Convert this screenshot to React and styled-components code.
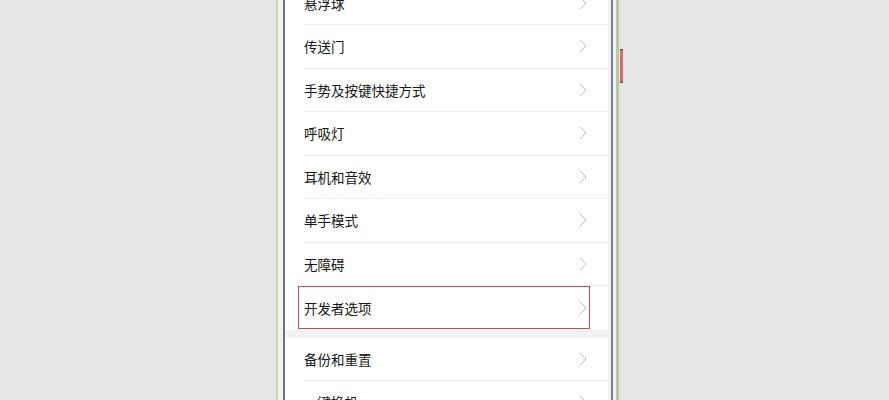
import React from "react";
import styled, { createGlobalStyle } from "styled-components";

const Global = createGlobalStyle`
  html, body { margin: 0; padding: 0; background: #e4e5e7; overflow: hidden; }
  body { font-family: "Noto Sans CJK SC", "Noto Sans", sans-serif; }
`;

const Stage = styled.div`
  width: 889px;
  height: 400px;
  overflow: hidden;
  display: flex;
  padding-left: 276px;
  box-sizing: border-box;
`;

const PhoneOuter = styled.div`
  position: relative;
  display: flex;
  align-items: stretch;
  height: 460px;
  margin-top: -30px;
  border-left: 2px solid #c9d6a6;
  border-right: 3px solid #b8cb9c;
`;

const Bezel = styled.div`
  display: flex;
  background: #eff1ec;
  padding: 0 3px 0 5px;
`;

const InnerFrame = styled.div`
  display: flex;
  border-left: 2px solid #6f7177;
  border-right: 2px solid #7b7b99;
  background: #f1f1f3;
  padding-right: 3px;
`;

const Screen = styled.div`
  width: 323px;
  background: #ffffff;
  padding-top: 11.5px;
  display: flex;
  flex-direction: column;
`;

const SideButton = styled.div`
  position: absolute;
  right: -7px;
  top: 80px;
  width: 3px;
  height: 32px;
  background: #dd6b6b;
  border-radius: 1px;
  box-shadow: 0 -1px 0 #333, 0 1px 0 #333;
`;

const Group = styled.div`
  background: #fff;
`;

const Gap = styled.div`
  height: 8px;
  background: #f2f2f4;
`;

const Row = styled.div`
  position: relative;
  height: 43.5px;
  padding-left: 19px;
  display: flex;
`;

const RowInner = styled.div`
  flex: 1;
  display: flex;
  align-items: center;
  justify-content: space-between;
  padding-right: 21px;
  border-bottom: ${(p) => (p.$last ? "none" : "1px solid #efefef")};
  box-sizing: border-box;
`;

const Label = styled.span`
  font-size: 13.5px;
  color: #161616;
  letter-spacing: 0;
`;

const Highlight = styled.div`
  position: absolute;
  left: 13px;
  right: 18px;
  top: 0;
  bottom: 0.5px;
  border: 1.5px solid #d04a55;
  pointer-events: none;
`;

const Chevron = () => (
  <svg width="8" height="14" viewBox="0 0 8 14">
    <polyline
      points="1,1 7,7 1,13"
      fill="none"
      stroke="#bdbdbd"
      strokeWidth="1"
    />
  </svg>
);

const Item = ({ label, last, highlight }) => (
  <Row>
    <RowInner $last={last}>
      <Label>{label}</Label>
      <Chevron />
    </RowInner>
    {highlight && <Highlight />}
  </Row>
);

export default function App() {
  return (
    <>
      <Global />
      <Stage>
        <PhoneOuter>
          <Bezel>
            <InnerFrame>
              <Screen>
                <Group>
                  <Item label="悬浮球" />
                  <Item label="传送门" />
                  <Item label="手势及按键快捷方式" />
                  <Item label="呼吸灯" />
                  <Item label="耳机和音效" />
                  <Item label="单手模式" />
                  <Item label="无障碍" />
                  <Item label="开发者选项" last highlight />
                </Group>
                <Gap />
                <Group>
                  <Item label="备份和重置" />
                  <Item label="一键换机" />
                </Group>
              </Screen>
            </InnerFrame>
          </Bezel>
          <SideButton />
        </PhoneOuter>
      </Stage>
    </>
  );
}
